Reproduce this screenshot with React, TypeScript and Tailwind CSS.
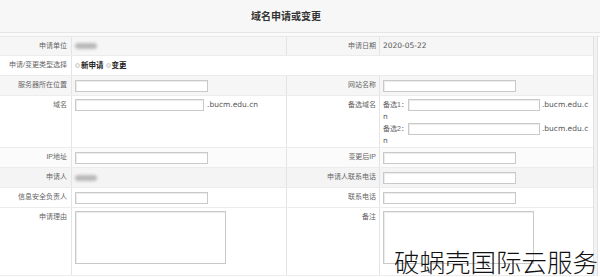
import React from 'react';

const FONT = '"Liberation Sans", "Noto Sans CJK SC", sans-serif';
const VAL = '"DejaVu Sans", "Noto Sans CJK SC", sans-serif';

function Input({ w = 'w-[133px]' }: { w?: string }) {
  return (
    <span
      className={`inline-block h-[12px] ${w} border border-[#c9c9c9] bg-white align-middle shadow-[inset_1px_1px_1px_rgba(0,0,0,0.08)]`}
    />
  );
}

function Blur() {
  return <span className="inline-block h-[6px] w-[22px] rounded-sm bg-[#b9b9b9] blur-[1.5px] align-middle" />;
}

function Radio() {
  return <span className="inline-block h-[5px] w-[5px] rounded-full border border-[#ccc] bg-[#eee] align-middle" />;
}

function Val({ children }: { children: React.ReactNode }) {
  return (
    <span className="text-[7.5px] text-[#555]" style={{ fontFamily: VAL }}>
      {children}
    </span>
  );
}

type Row = {
  h: string;
  bg: string;
  l1: string;
  v1: React.ReactNode;
  l2?: string;
  v2?: React.ReactNode;
  span?: boolean;
};

const rows: Row[] = [
  { h: 'h-[19px]', bg: 'bg-[#f6f6f6]', l1: '申请单位', v1: <Blur />, l2: '申请日期', v2: <Val>2020-05-22</Val> },
  {
    h: 'h-[20px]',
    bg: 'bg-white',
    l1: '申请/变更类型选择',
    span: true,
    v1: (
      <span className="flex items-center gap-[1px] text-[7.5px] font-bold text-[#222]">
        <Radio />
        <span>新申请</span>
        <span className="ml-[1px]"><Radio /></span>
        <span>变更</span>
      </span>
    ),
  },
  { h: 'h-[20px]', bg: 'bg-[#f6f6f6]', l1: '服务器所在位置', v1: <Input />, l2: '网站名称', v2: <Input /> },
  {
    h: 'h-[52px]',
    bg: 'bg-white',
    l1: '域名',
    v1: (
      <span className="flex items-center gap-[3px]">
        <Input w="w-[129px]" />
        <Val>.bucm.edu.cn</Val>
      </span>
    ),
    l2: '备选域名',
    v2: (
      <div className="flex flex-col text-[7px] leading-[12px] text-[#666]">
        <div className="flex items-center">
          <span>备选1：</span>
          <span><Input w="w-[132px]" /></span>
          <span className="ml-[2px]"><Val>.bucm.edu.c</Val></span>
        </div>
        <div><Val>n</Val></div>
        <div className="flex items-center">
          <span>备选2：</span>
          <span><Input w="w-[132px]" /></span>
          <span className="ml-[2px]"><Val>.bucm.edu.c</Val></span>
        </div>
        <div><Val>n</Val></div>
      </div>
    ),
  },
  { h: 'h-[20px]', bg: 'bg-[#fbfbfb]', l1: 'IP地址', v1: <Input />, l2: '变更后IP', v2: <Input /> },
  { h: 'h-[20px]', bg: 'bg-[#f4f4f4]', l1: '申请人', v1: <Blur />, l2: '申请人联系电话', v2: <Input /> },
  { h: 'h-[20px]', bg: 'bg-white', l1: '信息安全负责人', v1: <Input />, l2: '联系电话', v2: <Input /> },
  {
    h: 'h-[68px]',
    bg: 'bg-white',
    l1: '申请理由',
    v1: <span className="block h-[53px] w-[151px] border border-[#c9c9c9] bg-white shadow-[inset_1px_1px_1px_rgba(0,0,0,0.08)]" />,
    l2: '备注',
    v2: <span className="block h-[53px] w-[151px] border border-[#c9c9c9] bg-white shadow-[inset_1px_1px_1px_rgba(0,0,0,0.08)]" />,
  },
];

export default function App() {
  const tall = (r: Row) => r.h === 'h-[52px]' || r.h === 'h-[68px]';
  return (
    <div className="relative h-[277px] w-[600px] overflow-hidden bg-white text-[7px]" style={{ fontFamily: FONT }}>
      <div className="flex h-[33px] items-center justify-center border-b border-[#e6e6e6] bg-[#f7f7f7] pr-[28px] text-[10px] font-bold text-[#333]">
        域名申请或变更
      </div>
      <div className="h-[4px] border-b border-[#e8e8e8] bg-[#fafafa]" />
      <div className="flex">
        <div className="w-[593px]">
          {rows.map((r, i) => (
            <div key={i} className={`grid grid-cols-[72px_215px_93px_213px] border-b border-[#ececec] ${r.h} ${r.bg}`}>
              <div className={`flex justify-end border-r border-[#e4e4e4] pr-[4px] text-[#666] ${tall(r) ? 'items-start pt-[4px]' : 'items-center'}`}>
                {r.l1}
              </div>
              {r.span ? (
                <div className="col-span-3 flex items-center pl-[3px]">{r.v1}</div>
              ) : (
                <>
                  <div className={`flex border-r border-[#e4e4e4] pl-[3px] ${tall(r) ? 'items-start pt-[3px]' : 'items-center'}`}>
                    {r.v1}
                  </div>
                  <div className={`flex justify-end border-r border-[#e4e4e4] pr-[3px] text-[#666] ${tall(r) ? 'items-start pt-[4px]' : 'items-center'}`}>
                    {r.l2}
                  </div>
                  <div className={`flex pl-[3px] ${tall(r) ? 'items-start pt-[3px]' : 'items-center'}`}>{r.v2}</div>
                </>
              )}
            </div>
          ))}
        </div>
        <div className="flex w-[5px] border-x border-[#e2e2e2] bg-[#f2f2f2]" />
      </div>
      <div
        className="absolute bottom-[4px] right-[2px] text-[25.5px] font-light leading-none text-[#111]"
        style={{ fontFamily: '"Noto Sans CJK SC", sans-serif' }}
      >
        破蜗壳国际云服务
      </div>
    </div>
  );
}
